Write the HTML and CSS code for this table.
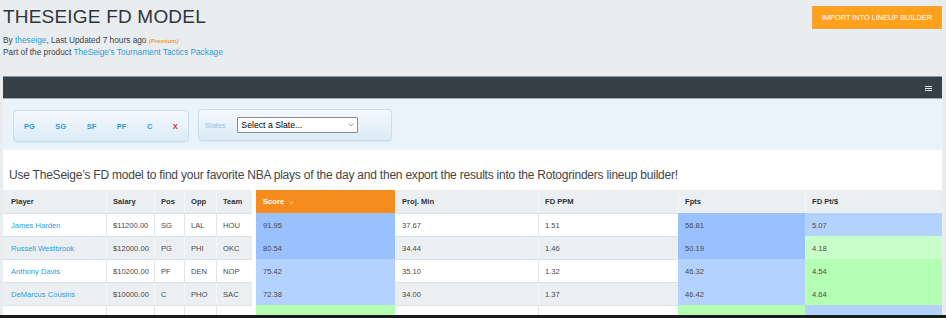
FILE: index.html
```html
<!DOCTYPE html>
<html lang="en">
<head>
<meta charset="utf-8">
<title>TheSeige FD Model</title>
<link rel="stylesheet" href="styles.css">
</head>
<body>
<div class="page">
  <header class="head">
    <div class="head-text">
      <h1 class="title">THESEIGE FD MODEL</h1>
      <p class="meta first">By <a href="#">theseige</a>, Last Updated 7 hours ago <em class="premium">(Premium)</em></p>
      <p class="meta">Part of the product <a href="#">TheSeige's Tournament Tactics Package</a></p>
    </div>
    <a class="import-btn" href="#">IMPORT INTO LINEUP BUILDER</a>
  </header>

  <nav class="navbar">
    <span class="burger"><i></i><i></i><i></i></span>
  </nav>

  <section class="filters">
    <div class="fbox positions">
      <a href="#">PG</a><a href="#">SG</a><a href="#">SF</a><a href="#">PF</a><a href="#">C</a><a href="#" class="clear">X</a>
    </div>
    <div class="fbox slates">
      <label class="slate-label">Slates</label>
      <div class="select-wrap">
        <select class="slate-select"><option>Select a Slate...</option></select>
        <svg class="chev" width="6" height="4" viewBox="0 0 6 4"><path d="M0.5 0.5 L3 3 L5.5 0.5" fill="none" stroke="#8a8a8a" stroke-width="0.8"/></svg>
      </div>
    </div>
  </section>

  <main class="content">
    <p class="intro">Use TheSeige’s FD model to find your favorite NBA plays of the day and then export the results into the Rotogrinders lineup builder!</p>
    <table class="grid">
      <colgroup>
        <col class="c-player"><col class="c-salary"><col class="c-pos"><col class="c-opp"><col class="c-team"><col class="c-gap">
        <col class="c-score"><col class="c-min"><col class="c-ppm"><col class="c-fpts"><col class="c-val">
      </colgroup>
      <thead>
        <tr>
          <th class="first">Player</th><th>Salary</th><th>Pos</th><th>Opp</th><th>Team</th><th class="gap"></th>
          <th class="score-h">Score <svg class="sort" width="5" height="3" viewBox="0 0 5 3"><path d="M0.4 0.4 L2.5 2.5 L4.6 0.4" fill="none" stroke="#fde2c4" stroke-width="0.8"/></svg></th>
          <th>Proj. Min</th><th>FD PPM</th><th>Fpts</th><th>FD Pt/$</th>
        </tr>
      </thead>
      <tbody>
        <tr class="odd">
          <td class="first"><a href="#">James Harden</a></td><td>$11200.00</td><td>SG</td><td>LAL</td><td>HOU</td><td class="gap"></td>
          <td class="nb blue-d">91.95</td><td class="nb">37.67</td><td>1.51</td><td class="blue-d">56.81</td><td class="blue-l">5.07</td>
        </tr>
        <tr class="even">
          <td class="first"><a href="#">Russell Westbrook</a></td><td>$12000.00</td><td>PG</td><td>PHI</td><td>OKC</td><td class="gap"></td>
          <td class="nb blue-d">80.54</td><td class="nb">34.44</td><td>1.46</td><td class="blue-d">50.19</td><td class="green-l">4.18</td>
        </tr>
        <tr class="odd">
          <td class="first"><a href="#">Anthony Davis</a></td><td>$10200.00</td><td>PF</td><td>DEN</td><td>NOP</td><td class="gap"></td>
          <td class="nb blue-l">75.42</td><td class="nb">35.10</td><td>1.32</td><td class="blue-l">46.32</td><td class="green">4.54</td>
        </tr>
        <tr class="even">
          <td class="first"><a href="#">DeMarcus Cousins</a></td><td>$10000.00</td><td>C</td><td>PHO</td><td>SAC</td><td class="gap"></td>
          <td class="nb blue-l">72.38</td><td class="nb">34.00</td><td>1.37</td><td class="blue-l">46.42</td><td class="green">4.64</td>
        </tr>
        <tr class="odd">
          <td class="first"></td><td></td><td></td><td></td><td></td><td class="gap"></td>
          <td class="nb green"></td><td class="nb"></td><td></td><td class="green"></td><td class="blue-l"></td>
        </tr>
      </tbody>
    </table>
  </main>
</div>
<div class="taskbar"></div>
</body>
</html>
```

FILE: styles.css
```css
html {
  overflow: hidden;
}
body {
  margin: 0;
  background: #eaedf0;
  font-family: "Liberation Sans", Arial, sans-serif;
  color: #333;
}
a {
  text-decoration: none;
  color: #2a9fd6;
}
.page {
  padding: 0 4px 0 3px;
}

/* header */
.head {
  display: flex;
  justify-content: space-between;
  align-items: flex-start;
  height: 76px;
}
.head-text {
  padding-top: 6px;
}
.title {
  margin: 0;
  font-size: 19px;
  line-height: 22px;
  font-weight: normal;
  letter-spacing: 0.2px;
  color: #2f353b;
}
.meta {
  margin: 0;
  font-size: 8.3px;
  line-height: 11.5px;
  color: #3d4246;
}
.meta.first {
  margin-top: 6.6px;
}
.premium {
  font-size: 6px;
  font-weight: bold;
  color: #f0a030;
}
.import-btn {
  margin-top: 6px;
  width: 130px;
  height: 23px;
  box-sizing: border-box;
  display: flex;
  align-items: center;
  justify-content: center;
  background: #ffa11b;
  border: 1px solid #f7a33a;
  color: #fff;
  font-size: 7.45px;
  letter-spacing: -0.05px;
}

/* navbar */
.navbar {
  height: 21px;
  background: #373f47;
  border-top: 1px solid #8e959b;
  border-bottom: 1px solid #a3aab0;
  display: flex;
  align-items: center;
  justify-content: flex-end;
  padding-right: 10px;
}
.burger {
  display: flex;
  flex-direction: column;
  gap: 1px;
  width: 7px;
  margin-top: 1px;
}
.burger i {
  display: block;
  height: 1px;
  background: #e8eaec;
}

/* filters */
.filters {
  height: 51px;
  box-sizing: border-box;
  background: #eaf3fa;
  padding: 10px 0 0 10px;
  display: flex;
  align-items: flex-start;
  gap: 9px;
}
.fbox {
  height: 32px;
  box-sizing: border-box;
  border: 1px solid #c9dded;
  border-radius: 4px;
  background: linear-gradient(#f3f9fd, #dcebf6);
  box-shadow: 0 1px 1px rgba(150, 180, 200, 0.15);
  display: flex;
  align-items: center;
}
.positions {
  width: 176px;
  margin-top: 1px;
  padding-left: 10px;
  gap: 20.5px;
}
.positions a {
  font-size: 7.5px;
  font-weight: bold;
  color: #2b9bd9;
}
.positions a.clear {
  color: #c0392b;
}
.slates {
  width: 194px;
  padding-left: 6px;
  gap: 11px;
}
.slate-label {
  font-size: 7.5px;
  color: #87c7ec;
}
.select-wrap {
  position: relative;
  display: flex;
}
.slate-select {
  appearance: none;
  -webkit-appearance: none;
  width: 121px;
  height: 16px;
  box-sizing: border-box;
  border: 1px solid #8a8a8a;
  border-radius: 1px;
  background: #fff;
  padding: 0 0 0 3.5px;
  margin: 0;
  font-family: "Liberation Sans", Arial, sans-serif;
  font-size: 8.7px;
  color: #000;
}
.chev {
  position: absolute;
  right: 4px;
  top: 6px;
}

/* content */
.content {
  background: #fff;
}
.intro {
  margin: 0;
  padding: 17px 6px 7px 6px;
  font-size: 12px;
  letter-spacing: -0.22px;
  line-height: 16px;
  color: #444;
}
.grid {
  width: 939px;
  table-layout: fixed;
  border-collapse: separate;
  border-spacing: 0;
  font-size: 7.6px;
}
.c-player { width: 103px; }
.c-salary { width: 48px; }
.c-pos { width: 30px; }
.c-opp { width: 32px; }
.c-team { width: 36px; }
.c-gap { width: 4px; }
.c-score { width: 139px; }
.c-min { width: 143px; }
.c-ppm { width: 140px; }
.c-fpts { width: 127px; }
.c-val { width: 137px; }

.grid th,
.grid td {
  height: 23px;
  box-sizing: border-box;
  padding: 0 0 0 6px;
  text-align: left;
  vertical-align: middle;
  white-space: nowrap;
  overflow: hidden;
  border-left: 1px solid #e3e6e9;
}
.grid th {
  background: #eceff1;
  color: #333;
  font-weight: bold;
  border-left-color: #f6f7f8;
}
.grid td {
  border-top: 1px solid #dfe2e5;
  color: #4a4a4a;
}
.grid tr.even td {
  background: #eceff1;
  border-left-color: #f6f7f8;
}
.grid .first {
  border-left: none;
  padding-left: 8px;
}
.grid .gap,
.grid tr.even td.gap {
  background: #fff;
  border: none;
  padding: 0;
}
.grid .nb {
  border-left: none;
  padding-left: 7px;
}
.grid th.score-h {
  background: #f68c1e;
  color: #fff;
  border-left: none;
  padding-left: 7px;
}
.sort {
  margin-left: 3px;
  vertical-align: middle;
}
.grid tr td.blue-d {
  background: #99c1fe;
  border-top-color: #99c1fe;
  border-left-color: #99c1fe;
}
.grid tr td.blue-l {
  background: #b3d2ff;
  border-top-color: #b3d2ff;
  border-left-color: #b3d2ff;
}
.grid tr td.green {
  background: #b4ffb4;
  border-top-color: #b4ffb4;
  border-left-color: #b4ffb4;
}
.grid tr td.green-l {
  background: #c8ffc8;
  border-top-color: #c8ffc8;
  border-left-color: #c8ffc8;
}

/* bottom strip of the screen */
.taskbar {
  position: fixed;
  left: 0;
  right: 0;
  bottom: 0;
  height: 3px;
  background: #1b1b1b;
}
```
